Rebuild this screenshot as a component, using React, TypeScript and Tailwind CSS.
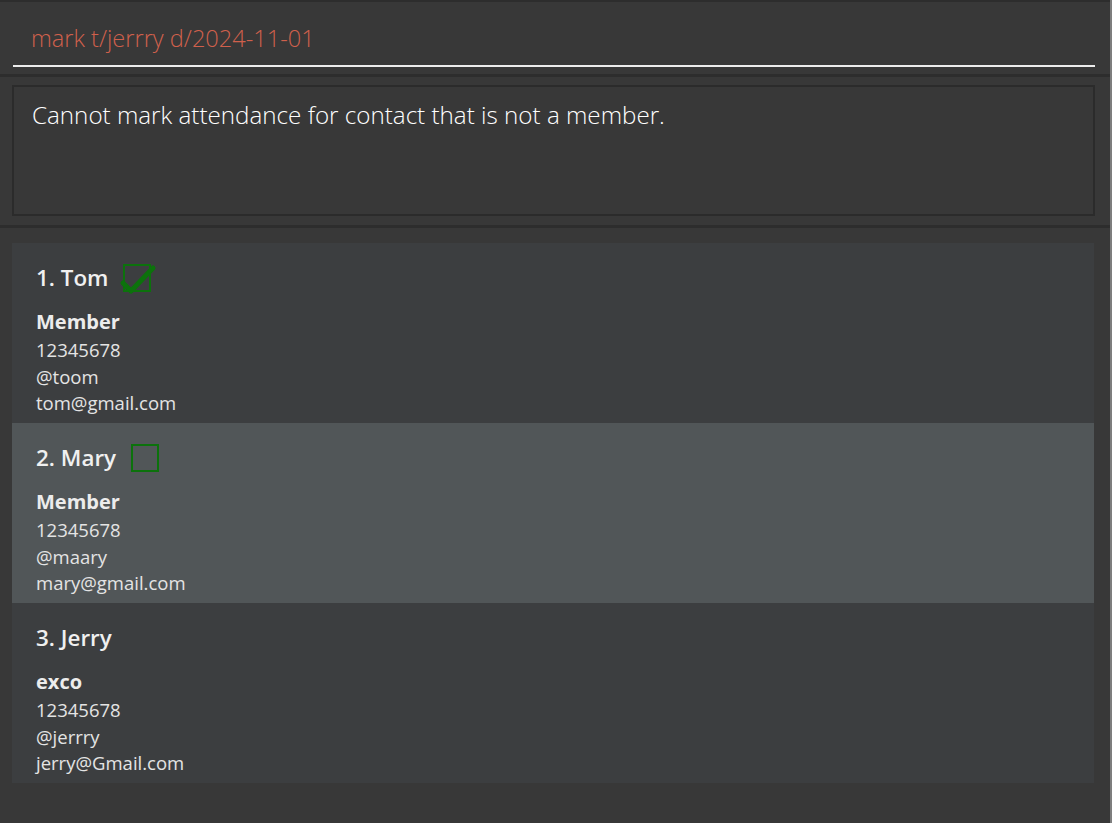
import React from 'react';

type Person = {
  index: number;
  name: string;
  role: string;
  phone: string;
  handle: string;
  email: string;
  attendance: 'checked' | 'empty' | 'none';
  selected?: boolean;
};

const people: Person[] = [
  { index: 1, name: 'Tom', role: 'Member', phone: '12345678', handle: '@toom', email: 'tom@gmail.com', attendance: 'checked' },
  { index: 2, name: 'Mary', role: 'Member', phone: '12345678', handle: '@maary', email: 'mary@gmail.com', attendance: 'empty', selected: true },
  { index: 3, name: 'Jerry', role: 'exco', phone: '12345678', handle: '@jerrry', email: 'jerry@Gmail.com', attendance: 'none' },
];

function AttendanceBox({ checked }: { checked: boolean }) {
  return (
    <div className="relative w-[28px] h-[28px] border-2 border-[#0c720c]">
      {checked && (
        <svg
          className="absolute left-[-4px] top-[-4px] overflow-visible"
          width="36"
          height="36"
          viewBox="0 0 36 36"
          fill="none"
        >
          <path d="M2 21 L10 29 L32 6" stroke="#0c720c" strokeWidth="5" strokeLinecap="round" strokeLinejoin="round" />
        </svg>
      )}
    </div>
  );
}

function PersonCard({ p }: { p: Person }) {
  return (
    <div className={`h-[180px] pl-[24px] pt-[20px] ${p.selected ? 'bg-[#515658]' : 'bg-[#3c3e40]'}`}>
      <div className="h-[30px] flex items-center gap-[15px]">
        <span className="text-[22.4px] leading-[30px] font-semibold text-[#f0f0f0]">
          {p.index}. {p.name}
        </span>
        {p.attendance !== 'none' && <AttendanceBox checked={p.attendance === 'checked'} />}
      </div>
      <div className="mt-[16px] text-[20px] leading-[26px] font-bold text-[#ececec]">{p.role}</div>
      <div className="mt-[2px] text-[18.5px] leading-[26.5px] text-[#e4e4e4]">
        <div>{p.phone}</div>
        <div>{p.handle}</div>
        <div>{p.email}</div>
      </div>
    </div>
  );
}

export default function App() {
  return (
    <div className="w-[1112px] h-[823px] bg-[#383838] flex overflow-hidden font-['Open_Sans',_'Noto_Sans',_sans-serif]">
      <div className="flex-1 flex flex-col border-t-2 border-[#2d2d2d]">
        {/* Command box */}
        <div className="h-[72px] pt-[20px] pl-[13px] pr-[15px]">
          <div className="pb-[11px] border-b-2 border-[#ececec]">
            <div className="pl-[18px] h-[32px] leading-[32px] text-[23.6px] font-light text-[#d0604c]">
              mark t/jerrry d/2024-11-01
            </div>
          </div>
        </div>

        <div className="h-[3px] bg-[#2d2d2d]" />

        {/* Result display */}
        <div className="pt-[8px] pb-[9px] pl-[12px] pr-[15px]">
          <div className="h-[131px] border-2 border-[#2b2b2b] pl-[18px] pt-[13px]">
            <div className="text-[24.2px] leading-[30px] font-light text-white">
              Cannot mark attendance for contact that is not a member.
            </div>
          </div>
        </div>

        <div className="h-[3px] bg-[#2d2d2d]" />

        {/* Person list */}
        <div className="pt-[15px] pl-[12px] pr-[16px]">
          {people.map((p) => (
            <PersonCard key={p.index} p={p} />
          ))}
        </div>
      </div>
      <div className="w-[2px] bg-[#7e7e7e]" />
    </div>
  );
}
